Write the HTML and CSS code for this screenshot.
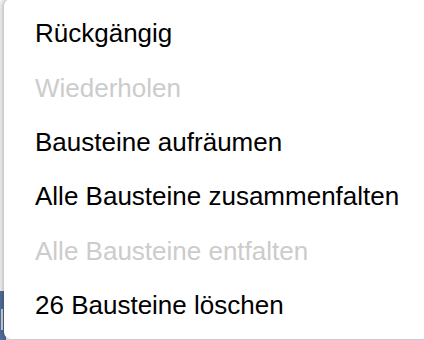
FILE: index.html
```html
<!DOCTYPE html>
<html lang="de">
<head>
<meta charset="utf-8">
<title>Kontextmenü</title>
<link rel="stylesheet" href="styles.css">
</head>
<body>
<div class="stage">
  <div class="block"></div>
  <div class="block-field"></div>
  <ul class="menu">
    <li class="item">Rückgängig</li>
    <li class="item disabled">Wiederholen</li>
    <li class="item">Bausteine aufräumen</li>
    <li class="item">Alle Bausteine zusammenfalten</li>
    <li class="item disabled">Alle Bausteine entfalten</li>
    <li class="item">26 Bausteine löschen</li>
  </ul>
</div>
</body>
</html>
```

FILE: styles.css
```css
html, body {
  margin: 0;
  padding: 0;
  background: #ffffff;
}

.stage {
  position: relative;
  width: 424px;
  height: 340px;
  overflow: hidden;
  background: #ffffff;
}

.block {
  position: absolute;
  left: -40px;
  top: 291px;
  width: 46px;
  height: 60px;
  background: #5374a0;
}

.block-field {
  position: absolute;
  left: 1px;
  top: 309px;
  width: 2px;
  height: 21px;
  background: #dfe3e8;
}

.menu {
  position: absolute;
  left: 4px;
  top: -1px;
  width: 460px;
  margin: 0;
  padding: 7px 0 7px 0;
  list-style: none;
  background: #ffffff;
  border-radius: 7px;
  box-shadow: 0 0 6px 2px rgba(0, 0, 0, 0.3);
  font-family: "Liberation Sans", Arial, sans-serif;
  font-size: 26px;
  line-height: 30px;
  color: #000000;
}

.item {
  padding: 12.2px 0 12.2px 31px;
  white-space: nowrap;
}

.disabled {
  color: #cccccc;
}
```
